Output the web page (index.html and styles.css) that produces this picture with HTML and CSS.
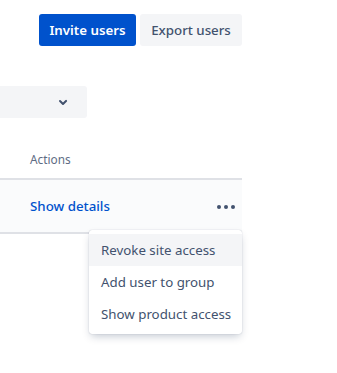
FILE: index.html
```html
<!DOCTYPE html>
<html lang="en">
  <head>
    <meta charset="UTF-8" />
    <meta name="viewport" content="width=device-width, initial-scale=1.0" />
    <title>Users</title>
    <link rel="stylesheet" href="styles.css">
  </head>

  <body>
    <div class="page">
      <div class="header">
        <button class="btn btn-primary">Invite users</button>
        <button class="btn btn-default">Export users</button>
      </div>

      <div class="filter">
        <svg width="24" height="24" viewBox="0 0 24 24">
          <path d="M8.3 10.3a1 1 0 0 1 1.4 0L12 12.6l2.3-2.3a1 1 0 1 1 1.4 1.4l-3 3a1 1 0 0 1-1.4 0l-3-3a1 1 0 0 1 0-1.4z" fill="#42526e" />
        </svg>
      </div>

      <div class="table">
        <div class="table-head">Actions</div>
        <div class="table-row">
          <a class="link" href="#">Show details</a>
          <span class="more">
            <span class="dot"></span><span class="dot"></span><span class="dot"></span>
          </span>
        </div>
        <ul class="menu">
          <li class="menu-item active">Revoke site access</li>
          <li class="menu-item">Add user to group</li>
          <li class="menu-item">Show product access</li>
        </ul>
      </div>
    </div>
  </body>
</html>
```

FILE: styles.css
```css
html,
body {
  min-height: 100%;
}

body {
  margin: 0;
  font-family: "Noto Sans", "Open Sans", sans-serif;
  font-size: 13.3px;
  color: #172b4d;
  background: #fff;
}

.page {
  width: 242px;
  padding-bottom: 40px;
}

.header {
  display: flex;
  justify-content: flex-end;
  gap: 4px;
  padding-top: 14px;
}

.btn {
  height: 32px;
  border: none;
  border-radius: 3px;
  font-family: inherit;
  font-size: 13.3px;
  font-weight: 600;
  padding: 0;
  white-space: nowrap;
}

.btn-primary {
  width: 97px;
  background: #0052cc;
  color: #fff;
}

.btn-default {
  width: 102px;
  background: #f4f5f7;
  color: #42526e;
  font-weight: 500;
}

.filter {
  margin-top: 40px;
  width: 87px;
  height: 32px;
  background: #f4f5f7;
  border-radius: 0 3px 3px 0;
  display: flex;
  align-items: center;
  padding-left: 51px;
  box-sizing: border-box;
}

.table {
  margin-top: 33px;
}

.table-head {
  padding-left: 30px;
  height: 27px;
  font-size: 11.8px;
  color: #5e6c84;
  border-bottom: 2px solid #dfe1e6;
}

.table-row {
  height: 52px;
  background: #fafbfc;
  border-bottom: 2px solid #dfe1e6;
  display: flex;
  align-items: center;
  justify-content: space-between;
  padding: 0 7px 0 30px;
}

.link {
  color: #0052cc;
  text-decoration: none;
  font-weight: 500;
}

.more {
  display: flex;
  gap: 3px;
  padding-top: 1px;
}

.dot {
  width: 4px;
  height: 4px;
  border-radius: 50%;
  background: #42526e;
}

.menu {
  position: relative;
  width: 153px;
  margin: -4px 0 0 89px;
  padding: 4px 0;
  list-style: none;
  background: #fff;
  border-radius: 3px;
  box-shadow: 0 4px 8px -2px rgba(9, 30, 66, 0.25), 0 0 1px rgba(9, 30, 66, 0.31);
}

.menu-item {
  height: 32px;
  line-height: 32px;
  padding-left: 12px;
  color: #42526e;
  white-space: nowrap;
}

.menu-item.active {
  background: #f4f5f7;
}
```
